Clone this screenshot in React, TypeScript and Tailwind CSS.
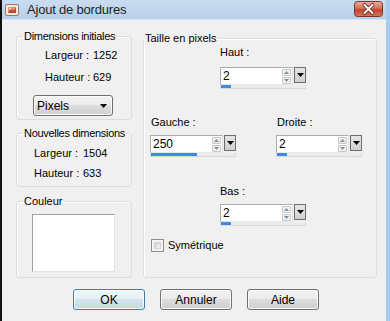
import React from "react";

function DownTri({ color = "#000" }: { color?: string }) {
  return (
    <svg width="7" height="4" viewBox="0 0 7 4">
      <path d="M0 0H7L3.5 4Z" fill={color} />
    </svg>
  );
}

function SpinBox({ value, fill }: { value: string; fill: number }) {
  return (
    <div className="flex flex-col w-[86px]">
      <div className="flex h-[18px]">
        <div className="flex w-[73px] h-[18px] border border-[#abadb3] border-b-[#e3e9ef] border-r-[#dbdfe6] bg-white">
          <div className="flex-1 pl-[2px] text-[12px] leading-[16px]">{value}</div>
          <div className="w-[10px] flex flex-col justify-center gap-[1px] pr-[1px]">
            <div className="h-[7px] flex items-center justify-center bg-[#f2f2f2] border border-[#c6c6c6] rounded-[1px]">
              <svg width="5" height="3" viewBox="0 0 5 3">
                <path d="M0 3L2.5 0L5 3Z" fill="#7a8fa8" />
              </svg>
            </div>
            <div className="h-[7px] flex items-center justify-center bg-[#f2f2f2] border border-[#c6c6c6] rounded-[1px]">
              <svg width="5" height="3" viewBox="0 0 5 3">
                <path d="M0 0L2.5 3L5 0Z" fill="#7a8fa8" />
              </svg>
            </div>
          </div>
        </div>
        <div className="ml-[1px] w-[12px] h-[16px] border border-[#6e6e6e] bg-linear-to-b from-[#e6e6e6] to-[#cfcfcf] flex items-center justify-center">
          <DownTri />
        </div>
      </div>
      <div className="h-[4px] bg-[#ececec] border border-t-0 border-[#d9d9d9]">
        <div className="h-[3px] bg-[#3c8de0]" style={{ width: fill }} />
      </div>
    </div>
  );
}

function Btn({ label, def }: { label: string; def?: boolean }) {
  return (
    <div
      className={
        "w-[72px] h-[21px] rounded-[3px] border flex items-center justify-center text-[12px] shadow-[inset_0_0_0_1px_#fbfbfb] " +
        (def
          ? "border-[#3c7fb1] bg-[linear-gradient(#f1f6f9_0%,#e6eff5_50%,#d4e3ec_50%,#c6dae6_100%)]"
          : "border-[#707070] bg-[linear-gradient(#f2f2f2_0%,#ebebeb_50%,#dddddd_50%,#cfcfcf_100%)]")
      }
    >
      {label}
    </div>
  );
}

function CloseIcon() {
  return (
    <svg width="29" height="16" viewBox="0 0 29 16">
      <defs>
        <linearGradient id="cg" x1="0" y1="0" x2="0" y2="1">
          <stop offset="0" stopColor="#eab0a0" />
          <stop offset="0.45" stopColor="#d66f58" />
          <stop offset="0.55" stopColor="#c2452e" />
          <stop offset="1" stopColor="#d3765c" />
        </linearGradient>
      </defs>
      <rect x="0.5" y="0.5" width="28" height="15" rx="3" fill="url(#cg)" stroke="#7a3326" />
      <path d="M10.5 4L18.5 12M18.5 4L10.5 12" stroke="#5a1c12" strokeWidth="3.6" strokeLinecap="round" />
      <path d="M10.5 4L18.5 12M18.5 4L10.5 12" stroke="#ffffff" strokeWidth="2.1" strokeLinecap="round" />
    </svg>
  );
}

export default function App() {
  return (
    <div className="w-[390px] h-[321px] overflow-hidden flex flex-col bg-[#f0f0f0] border-l-2 border-l-[#101010] border-r-[4px] border-r-[#a7cbee] font-['Liberation_Sans',Arial,sans-serif] text-[11px] leading-[14px] text-black">
      {/* Title bar */}
      <div className="h-[20px] shrink-0 flex items-start bg-linear-to-b from-[#cadcf0] to-[#b8cfe9] border-b border-[#dae6f3]">
        <div className="ml-[3px] mt-[3px] w-[14px] h-[14px]">
          <svg width="14" height="14" viewBox="0 0 14 14">
            <rect x="0.5" y="1.5" width="13" height="11" rx="1.5" fill="#f4e9dc" stroke="#9b7b62" />
            <rect x="3" y="4" width="8" height="6" fill="#e08a6a" />
            <path d="M3 10L6 6L8 8L11 5V10Z" fill="#b8452c" />
            <circle cx="5" cy="5.5" r="1" fill="#fff3c0" />
          </svg>
        </div>
        <div className="ml-[8px] text-[13px] leading-[19px] text-[#1e1e1e] whitespace-nowrap tracking-[-0.2px]">Ajout de bordures</div>
        <div className="ml-auto mr-[3px] mt-[1px] flex">
          <CloseIcon />
        </div>
      </div>

      {/* Client */}
      <div className="flex pl-[14px] pt-[10px] shrink-0">
        {/* Left column */}
        <div className="w-[116px] flex flex-col">
          <fieldset className="border border-[#d5dfe5] rounded-[3px] pb-[3px] shadow-[inset_1px_1px_0_#fff]">
            <legend className="ml-[6px] px-[1px] leading-[12px] whitespace-nowrap tracking-[-0.3px]">Dimensions initiales</legend>
            <div className="mt-[6px] ml-[28px] flex">
              <span className="w-[48px]">Largeur :</span>
              <span>1252</span>
            </div>
            <div className="mt-[8px] ml-[28px] flex">
              <span className="w-[48px]">Hauteur :</span>
              <span>629</span>
            </div>
            <div className="mt-[11px] ml-[16px] w-[80px] h-[21px] rounded-[3px] border border-[#707070] bg-[linear-gradient(#f2f2f2_0%,#ebebeb_50%,#dddddd_50%,#cfcfcf_100%)] shadow-[inset_0_0_0_1px_#fbfbfb] flex items-center pl-[3px] pr-[5px] text-[12px]">
              <span>Pixels</span>
              <span className="ml-auto flex items-center">
                <DownTri />
              </span>
            </div>
          </fieldset>

          <fieldset className="mt-[7px] border border-[#d5dfe5] rounded-[3px] pb-[6px] shadow-[inset_1px_1px_0_#fff]">
            <legend className="ml-[6px] px-[1px] leading-[12px] whitespace-nowrap tracking-[-0.3px]">Nouvelles dimensions</legend>
            <div className="mt-[7px] ml-[17px] flex">
              <span className="w-[49px]">Largeur :</span>
              <span>1504</span>
            </div>
            <div className="mt-[6px] ml-[17px] flex">
              <span className="w-[49px]">Hauteur :</span>
              <span>633</span>
            </div>
          </fieldset>

          <fieldset className="mt-[8px] border border-[#d5dfe5] rounded-[3px] pb-[5px] shadow-[inset_1px_1px_0_#fff]">
            <legend className="ml-[6px] px-[1px] leading-[12px]">Couleur</legend>
            <div className="mt-[7px] ml-[15px] w-[83px] h-[58px] bg-white border border-[#a0a0a0] border-r-[#e2e2e2] border-b-[#e2e2e2]" />
          </fieldset>
        </div>

        {/* Right group */}
        <fieldset className="ml-[11px] mt-[2px] w-[234px] border border-[#d5dfe5] rounded-[3px] pb-[25px] shadow-[inset_1px_1px_0_#fff]">
          <legend className="px-[1px] leading-[12px] whitespace-nowrap">Taille en pixels</legend>
          <div className="mt-[1px] ml-[76px]">Haut :</div>
          <div className="mt-[8px] ml-[76px]">
            <SpinBox value="2" fill={10} />
          </div>
          <div className="mt-[26px] flex">
            <div className="ml-[6px] flex flex-col">
              <span className="pl-[1px]">Gauche :</span>
              <div className="mt-[6px]">
                <SpinBox value="250" fill={46} />
              </div>
            </div>
            <div className="ml-[40px] flex flex-col">
              <span className="pl-[1px]">Droite :</span>
              <div className="mt-[6px]">
                <SpinBox value="2" fill={10} />
              </div>
            </div>
          </div>
          <div className="mt-[27px] ml-[76px]">Bas :</div>
          <div className="mt-[6px] ml-[76px]">
            <SpinBox value="2" fill={10} />
          </div>
          <div className="mt-[12px] ml-[7px] flex items-center">
            <div className="w-[13px] h-[13px] border border-[#8e8f8f] bg-[#f4f4f4] p-[2px]">
              <div className="w-full h-full border border-[#d4d4d4] bg-linear-to-br from-[#cfcfcf] to-[#f6f6f6]" />
            </div>
            <span className="ml-[4px]">Symétrique</span>
          </div>
        </fieldset>
      </div>

      {/* Buttons */}
      <div className="mt-[11px] pl-[71px] flex gap-[15px]">
        <Btn label="OK" def />
        <Btn label="Annuler" />
        <Btn label="Aide" />
      </div>
    </div>
  );
}
